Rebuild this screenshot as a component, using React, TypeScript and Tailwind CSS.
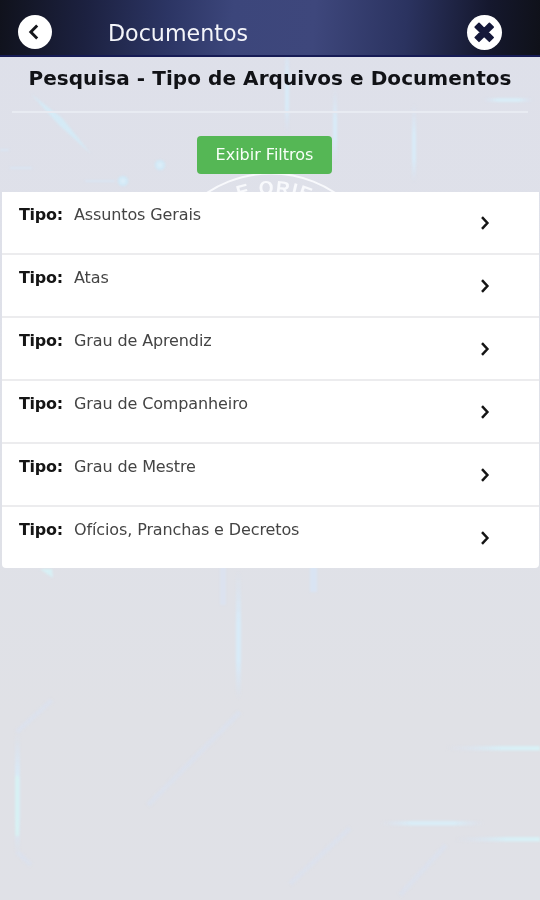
const rows = [
  "Assuntos Gerais",
  "Atas",
  "Grau de Aprendiz",
  "Grau de Companheiro",
  "Grau de Mestre",
  "Ofícios, Pranchas e Decretos",
];

function Backdrop() {
  return (
    <svg className="absolute inset-0 -z-10" width="540" height="900" viewBox="0 0 540 900" aria-hidden="true">
      <defs>
        <linearGradient id="v" x1="0" y1="0" x2="0" y2="1">
          <stop offset="0" stopColor="#d8e4f5" stopOpacity="0" />
          <stop offset=".4" stopColor="#d8ebf8" />
          <stop offset=".7" stopColor="#d8ebf8" />
          <stop offset="1" stopColor="#d8e4f5" stopOpacity="0" />
        </linearGradient>
        <linearGradient id="h" x1="0" y1="0" x2="1" y2="0">
          <stop offset="0" stopColor="#dae4f4" stopOpacity="0" />
          <stop offset=".3" stopColor="#d9edf7" />
          <stop offset=".7" stopColor="#d9edf7" />
          <stop offset="1" stopColor="#dae4f4" stopOpacity="0" />
        </linearGradient>
        <linearGradient id="he" x1="0" y1="0" x2="1" y2="0">
          <stop offset="0" stopColor="#dae2f4" stopOpacity="0" />
          <stop offset=".6" stopColor="#d8eff6" />
          <stop offset="1" stopColor="#d8f1f6" />
        </linearGradient>
        <linearGradient id="tint" x1="0" y1="0" x2="0" y2="1">
          <stop offset="0" stopColor="#dee0ea" />
          <stop offset=".55" stopColor="#dfe1e8" />
          <stop offset=".8" stopColor="#e0e1e6" />
          <stop offset="1" stopColor="#e0e1e7" />
        </linearGradient>
        <filter id="soft" filterUnits="userSpaceOnUse" x="0" y="0" width="540" height="900" colorInterpolationFilters="sRGB">
          <feGaussianBlur stdDeviation=".8" />
        </filter>
        <path id="ring" d="M171 294 A100 100 0 0 1 371 294" />
      </defs>
      <rect width="540" height="900" fill="url(#tint)" />
      <g filter="url(#soft)">
        <path d="M31 94 L62 118 L91 154 L58 124Z" fill="#d4eaf6" />
        <rect x="285" y="40" width="4" height="95" fill="url(#v)" />
        <rect x="333" y="88" width="4" height="75" fill="url(#v)" />
        <rect x="412" y="103" width="4" height="80" fill="url(#v)" />
        <rect x="482" y="98" width="52" height="4" fill="url(#h)" />
        <circle cx="160" cy="165" r="4" fill="#dcedf8" stroke="#d0e8f6" strokeWidth="2.5" />
        <circle cx="123" cy="181" r="4" fill="#dcedf8" stroke="#d0e8f6" strokeWidth="2.5" />
        <path d="M0 150h9M10 168h22M85 181h30" stroke="#d9e5f3" strokeWidth="2" />
        <path d="M40 569 L53 578 L52 569Z" fill="#d7f0f5" />
        <rect x="220" y="560" width="6" height="45" fill="#dae3f2" opacity=".7" />
        <rect x="310" y="560" width="7" height="32" fill="#d9e4f3" />
        <rect x="236" y="570" width="5" height="130" fill="url(#v)" />
        <rect x="15" y="730" width="5" height="125" fill="url(#v)" />
        <rect x="15.5" y="776" width="3.5" height="60" fill="#d7f4f3" opacity=".8" />
        <path d="M17 732 L52 700M17 852 L31 865M148 805 L240 712M290 884 L350 828M400 895 L446 845" stroke="#dce1ec" strokeWidth="5" fill="none" />
        <rect x="445" y="746" width="95" height="4.5" fill="url(#he)" />
        <rect x="380" y="821" width="105" height="4.5" fill="url(#h)" />
        <rect x="455" y="837" width="85" height="4.5" fill="url(#he)" />
      </g>
      <circle cx="271" cy="289" r="115.5" fill="none" stroke="#f8f9fc" strokeWidth="2" />
      <text fill="#f8f9fc" fontFamily="Liberation Sans, sans-serif" fontWeight="700" fontSize="19" letterSpacing="1.6">
        <textPath href="#ring" startOffset="51.2%" textAnchor="middle">
          E ORIE
        </textPath>
      </text>
    </svg>
  );
}

export default function App() {
  return (
    <div className="relative isolate h-[900px] w-[540px] overflow-hidden font-['DejaVu_Sans',Verdana,sans-serif]">
      <Backdrop />
      <header className="flex h-[57px] items-center border-b-2 border-[#161b55] bg-[linear-gradient(94deg,#10121c_0%,#1c2140_16%,#2c3564_31%,#3c467b_43%,#3e477c_58%,#2b3360_75%,#15182e_90%,#0f1119_100%)] pt-[9px] pl-[18px]">
        <button className="flex size-[34px] items-center justify-center rounded-full bg-white" aria-label="Voltar">
          <svg width="34" height="34" viewBox="0 0 34 34" fill="none" stroke="#15161b" strokeWidth="2.9">
            <path d="M19.2 10.6 L12.8 17.1 L19.2 23.6" />
          </svg>
        </button>
        <h1 className="ml-14 pt-[2px] text-[22.2px] leading-7 text-[#f4f5fa]">Documentos</h1>
        <button className="ml-auto mr-[38px] mt-px flex size-[35px] items-center justify-center rounded-full bg-white" aria-label="Fechar">
          <svg width="35" height="35" viewBox="0 0 35 35" fill="#15183a" stroke="#15183a" strokeWidth="1.6" strokeLinejoin="round">
            <path d="M12 8.3 L17.2 13.5 L22.4 8.3 L26.2 12.1 L21 17.3 L26.2 22.5 L22.4 26.3 L17.2 21.1 L12 26.3 L8.2 22.5 L13.4 17.3 L8.2 12.1Z" />
          </svg>
        </button>
      </header>
      <h2 className="flex h-[54px] items-start justify-center whitespace-nowrap pt-[7px] text-[20px] leading-7 font-bold tracking-[0.06px] text-[#111216]">
        Pesquisa - Tipo de Arquivos e Documentos
      </h2>
      <hr className="mx-3 border-t-2 border-[#e8ebf2]" />
      <div className="flex h-[79px] pt-[23px] pl-[197px]">
        <button className="h-[38px] w-[135px] rounded-[4px] bg-[#55b755] text-base text-[#f8fff8]">Exibir Filtros</button>
      </div>
      <ul className="mr-px ml-[2px] overflow-hidden rounded-b-[4px] bg-white">
        {rows.map((name) => (
          <li key={name} className="flex h-[63px] border-b-2 border-[#ececee] pl-[17px] pt-[13px] text-base leading-5 last:h-[61px] last:border-0">
            <b className="w-[55px] tracking-[-0.3px] text-[#151515]">Tipo:</b>
            <span className="tracking-[-0.12px] text-[#444]">{name}</span>
            <svg className="ml-auto mr-[48px] mt-[11px]" width="12" height="14" viewBox="0 0 12 14" fill="none" stroke="#151515" strokeWidth="2.5">
              <path d="M3 1.2 L8.4 7 L3 12.8" />
            </svg>
          </li>
        ))}
      </ul>
    </div>
  );
}
